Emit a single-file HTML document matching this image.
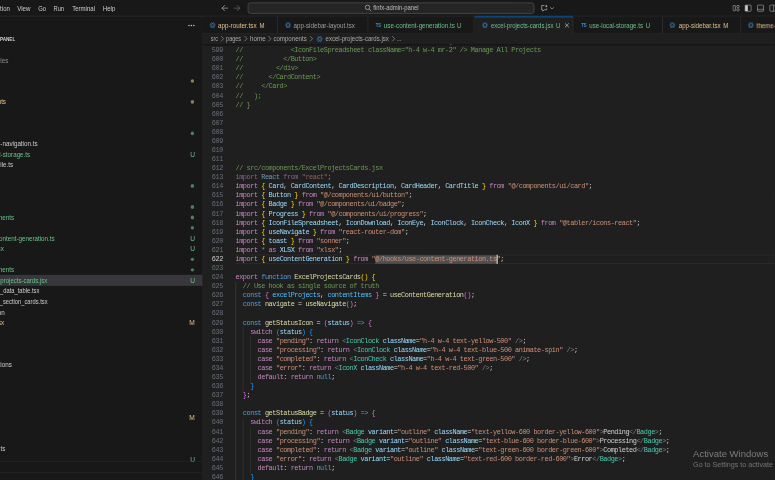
<!DOCTYPE html>
<html lang="en"><head><meta charset="utf-8"><title>excel-projects-cards.jsx - finfx-admin-panel - Visual Studio Code</title>
<style>
html,body{margin:0;padding:0;background:#181818;overflow:hidden;}
body{width:775px;height:480px;position:relative;font-family:"Liberation Sans",sans-serif;}
#root{position:absolute;left:0;top:0;width:1621.3px;height:1004.2px;transform:scale(0.478) rotate(0.002deg);transform-origin:0 0;overflow:hidden;filter:blur(0.7px);}
.t{position:absolute;height:22px;line-height:22px;white-space:pre;font-family:"Liberation Sans",sans-serif;}
.abs{position:absolute;}
.code{position:absolute;white-space:pre;font-family:"Liberation Mono",monospace;font-size:14.4px;letter-spacing:-0.942px;height:19px;line-height:19px;color:#d4d4d4;}
.ln{position:absolute;white-space:pre;font-family:"Liberation Mono",monospace;font-size:14.4px;letter-spacing:-0.942px;height:19px;line-height:19px;color:#666e7a;text-align:right;width:60px;}
.c{color:#6a9955}.k{color:#c586c0}.b{color:#569cd6}.v{color:#9cdcfe}.n{color:#4fc1ff}
.f{color:#dcdcaa}.s{color:#ce9178}.y{color:#4ec9b0}.g{color:#808080}
.b1{color:#ffd700}.b2{color:#da70d6}.b3{color:#179fff}
.fade{opacity:.62}
.sel{background:#4e4e4e}
</style></head><body><div id="root">

<div class="abs" style="left:0;top:0;width:100%;height:35.25px;background:#181818;border-bottom:2px solid #303030;box-sizing:border-box"></div>
<div class="t " style="right:1600.42px;transform-origin:100% 50%;top:5.95px;font-size:14.24px;color:#cccccc;transform:scaleX(0.8850);">Selection</div>
<div class="t " style="left:36.19px;transform-origin:0 50%;top:5.95px;font-size:14.24px;color:#cccccc;transform:scaleX(0.9023);">View</div>
<div class="t " style="left:79.71px;transform-origin:0 50%;top:5.95px;font-size:14.24px;color:#cccccc;transform:scaleX(0.8702);">Go</div>
<div class="t " style="left:112.34px;transform-origin:0 50%;top:5.95px;font-size:14.24px;color:#cccccc;transform:scaleX(0.8410);">Run</div>
<div class="t " style="left:150.84px;transform-origin:0 50%;top:5.95px;font-size:14.24px;color:#cccccc;transform:scaleX(0.8865);">Terminal</div>
<div class="t " style="left:215.06px;transform-origin:0 50%;top:5.95px;font-size:14.24px;color:#cccccc;transform:scaleX(0.8930);">Help</div>
<svg class="abs" style="left:462.29px;top:9.15px" width="16" height="16" viewBox="0 0 16 16"><g fill="none" stroke="#cccccc" stroke-width="1.2" stroke-linecap="square"><path d="M14 8H3M7.6 2.6 2.4 8l5.2 5.4"/></g></svg>
<svg class="abs" style="left:488.23px;top:9.15px" width="16" height="16" viewBox="0 0 16 16"><g transform="scale(-1,1) translate(-16,0)" fill="none" stroke="#7a7a7a" stroke-width="1.2" stroke-linecap="square"><path d="M14 8H3M7.6 2.6 2.4 8l5.2 5.4"/></g></svg>
<div class="abs" style="left:517.57px;top:5.44px;width:600.63px;height:23.33px;box-sizing:border-box;border:2px solid #454545;border-radius:6px;background:#252525"></div>
<svg class="abs" style="left:761.67px;top:9.15px" width="16" height="16" viewBox="0 0 16 16" fill="none" stroke="#cccccc" stroke-width="1.3"><circle cx="6.8" cy="6.4" r="4.6"/><path d="M10.1 9.8 15 14.7"/></svg>
<div class="t " style="left:781.38px;transform-origin:0 50%;top:6.15px;font-size:13.56px;color:#bdbdbd;transform:scaleX(0.9132);">finfx-admin-panel</div>
<svg class="abs" style="left:1131.33px;top:8.74px" width="16" height="16" viewBox="0 0 16 16" fill="none" stroke="#cccccc" stroke-width="1.3"><path d="M8 2.5H2.2v9h2.3v2.8l3-2.8h5.3V8.5"/><path d="M11.8 0.6l.9 2.2 2.2.9-2.2.9-.9 2.2-.9-2.2-2.2-.9 2.2-.9z" fill="#cccccc" stroke="none"/></svg>
<svg class="abs" style="left:1150.02px;top:11.74px" width="10" height="10" viewBox="0 0 10 10" fill="none" stroke="#cccccc" stroke-width="1.2"><path d="M1.2 3.2 5 7l3.8-3.8"/></svg>
<svg class="abs" style="left:1532.38px;top:8.95px" width="16" height="16" viewBox="0 0 16 16" fill="none" stroke="#cccccc" stroke-width="1.1"><rect x="1.5" y="2.5" width="5" height="11" rx="1"/><rect x="9.5" y="2.5" width="5" height="4" rx="1"/><rect x="9.5" y="9.5" width="5" height="4" rx="1"/></svg>
<svg class="abs" style="left:1557.48px;top:8.95px" width="16" height="16" viewBox="0 0 16 16" fill="none" stroke="#cccccc" stroke-width="1.1"><rect x="1.5" y="1.5" width="13" height="13" rx="1.3"/><path d="M2 2h5.5v12H2z" fill="#cccccc" stroke="none"/></svg>
<svg class="abs" style="left:1583.00px;top:8.95px" width="16" height="16" viewBox="0 0 16 16" fill="none" stroke="#cccccc" stroke-width="1.1"><rect x="1.5" y="1.5" width="13" height="13" rx="1.3"/><path d="M1.5 10.5h13" stroke-width="1"/></svg>
<svg class="abs" style="left:1608.53px;top:8.95px" width="16" height="16" viewBox="0 0 16 16" fill="none" stroke="#cccccc" stroke-width="1.1"><rect x="1.5" y="1.5" width="13" height="13" rx="1.3"/><path d="M9.5 1.5v13"/></svg>
<div class="abs" style="left:0;top:35.25px;width:423.64px;bottom:0;background:#181818;border-right:1px solid #2b2b2b;box-sizing:border-box"></div>
<div class="abs" style="left:393.61px;top:51.95px;width:2.9px;height:2.9px;border-radius:50%;background:#cccccc"></div>
<div class="abs" style="left:398.61px;top:51.95px;width:2.9px;height:2.9px;border-radius:50%;background:#cccccc"></div>
<div class="abs" style="left:403.61px;top:51.95px;width:2.9px;height:2.9px;border-radius:50%;background:#cccccc"></div>
<div class="t" style="right:1589.33px;top:70.38px;font-size:12.6px;font-weight:700;color:#d4d4d4;transform:scaleX(0.76);transform-origin:100% 50%">FINFX-ADMIN-PANEL</div>
<div class="abs" style="left:0;top:575.31px;width:423.64px;height:22.38px;background:#37373d"></div>
<div class="t " style="right:1603.77px;transform-origin:100% 50%;top:114.52px;font-size:14.24px;color:#8c8c8c;transform:scaleX(0.9204);">node_modules</div>
<div class="abs" style="left:398.60px;top:165.56px;width:7.4px;height:7.4px;border-radius:50%;background:#8f7e62"></div>
<div class="t " style="right:1608.79px;transform-origin:100% 50%;top:202.39px;font-size:14.24px;color:#e2c08d;transform:scaleX(0.9204);">components</div>
<div class="abs" style="left:398.60px;top:209.49px;width:7.4px;height:7.4px;border-radius:50%;background:#8f7e62"></div>
<div class="abs" style="left:398.60px;top:275.39px;width:7.4px;height:7.4px;border-radius:50%;background:#4d7f60"></div>
<div class="t " style="right:1542.26px;transform-origin:100% 50%;top:290.26px;font-size:14.24px;color:#cccccc;transform:scaleX(0.9204);">use-navigation.ts</div>
<div class="t " style="right:1558.58px;transform-origin:100% 50%;top:312.22px;font-size:14.24px;color:#69c389;transform:scaleX(0.9204);">use-local-storage.ts</div>
<div class="t " style="left:397.91px;transform-origin:0 50%;top:312.64px;font-size:14.01px;color:#69c389;transform:scaleX(0.9912);">U</div>
<div class="t " style="right:1593.93px;transform-origin:100% 50%;top:334.19px;font-size:14.24px;color:#cccccc;transform:scaleX(0.9204);">use-mobile.ts</div>
<div class="abs" style="left:398.60px;top:385.22px;width:7.4px;height:7.4px;border-radius:50%;background:#4d7f60"></div>
<div class="abs" style="left:398.60px;top:429.15px;width:7.4px;height:7.4px;border-radius:50%;background:#4d7f60"></div>
<div class="t " style="right:1591.84px;transform-origin:100% 50%;top:444.02px;font-size:14.24px;color:#69c389;transform:scaleX(0.9204);">components</div>
<div class="abs" style="left:398.60px;top:451.12px;width:7.4px;height:7.4px;border-radius:50%;background:#4d7f60"></div>
<div class="abs" style="left:398.60px;top:473.09px;width:7.4px;height:7.4px;border-radius:50%;background:#4d7f60"></div>
<div class="t " style="right:1506.69px;transform-origin:100% 50%;top:487.95px;font-size:14.24px;color:#69c389;transform:scaleX(0.9204);">use-content-generation.ts</div>
<div class="t " style="left:397.91px;transform-origin:0 50%;top:488.37px;font-size:14.01px;color:#69c389;transform:scaleX(0.9912);">U</div>
<div class="t " style="right:1612.97px;transform-origin:100% 50%;top:509.92px;font-size:14.24px;color:#69c389;transform:scaleX(0.9204);">content-generation.jsx</div>
<div class="t " style="left:397.91px;transform-origin:0 50%;top:510.34px;font-size:14.01px;color:#69c389;transform:scaleX(0.9912);">U</div>
<div class="abs" style="left:398.60px;top:538.99px;width:7.4px;height:7.4px;border-radius:50%;background:#4d7f60"></div>
<div class="t " style="right:1591.84px;transform-origin:100% 50%;top:553.85px;font-size:14.24px;color:#69c389;transform:scaleX(0.9204);">components</div>
<div class="abs" style="left:398.60px;top:560.95px;width:7.4px;height:7.4px;border-radius:50%;background:#4d7f60"></div>
<div class="t " style="right:1522.80px;transform-origin:100% 50%;top:575.82px;font-size:14.24px;color:#69c389;transform:scaleX(0.8850);">excel-projects-cards.jsx</div>
<div class="t " style="left:397.91px;transform-origin:0 50%;top:576.24px;font-size:14.01px;color:#69c389;transform:scaleX(0.9912);">U</div>
<div class="t " style="right:1539.12px;transform-origin:100% 50%;top:597.79px;font-size:14.24px;color:#cccccc;transform:scaleX(0.8496);">chart_data_table.tsx</div>
<div class="t " style="right:1521.34px;transform-origin:100% 50%;top:619.75px;font-size:14.24px;color:#cccccc;transform:scaleX(0.8496);">chart_section_cards.tsx</div>
<div class="t " style="right:1611.51px;transform-origin:100% 50%;top:641.72px;font-size:14.24px;color:#cccccc;transform:scaleX(0.9204);">data.json</div>
<div class="t " style="right:1612.97px;transform-origin:100% 50%;top:663.69px;font-size:14.24px;color:#e2c08d;transform:scaleX(0.9204);">page.tsx</div>
<div class="t " style="left:396.44px;transform-origin:0 50%;top:664.10px;font-size:14.01px;color:#e2c08d;transform:scaleX(0.9912);">M</div>
<div class="t " style="right:1596.23px;transform-origin:100% 50%;top:751.55px;font-size:14.24px;color:#cccccc;transform:scaleX(0.9204);">transactions</div>
<div class="t " style="left:396.44px;transform-origin:0 50%;top:861.80px;font-size:14.01px;color:#e2c08d;transform:scaleX(0.9912);">M</div>
<div class="t " style="right:1610.04px;transform-origin:100% 50%;top:927.28px;font-size:14.24px;color:#cccccc;transform:scaleX(0.9204);">tailwind.config.ts</div>
<div class="t " style="left:397.91px;transform-origin:0 50%;top:949.67px;font-size:14.01px;color:#69c389;transform:scaleX(0.9912);">U</div>
<div class="abs" style="left:0;top:965.06px;width:423.64px;height:1px;background:#2b2b2b"></div>
<div class="abs" style="left:0;top:988.28px;width:423.64px;height:1px;background:#2b2b2b"></div>
<div class="abs" style="left:423.64px;top:35.25px;right:0;bottom:0;background:#1f1f1f"></div>
<div class="abs" style="left:423.64px;top:35.25px;right:0;height:34.62px;background:#181818;border-bottom:1px solid #2b2b2b;box-sizing:border-box"></div>
<div class="abs" style="left:423.64px;top:35.25px;width:157.95px;height:34.62px;background:#181818;border-right:2px solid #2e2e2e;border-bottom:1px solid #2b2b2b;box-sizing:border-box"></div>
<svg class="abs" style="left:438.28px;top:45.60px" width="13.4" height="13.4" viewBox="0 0 16 16" fill="none" stroke="#3c7fb6" stroke-width="1.25"><ellipse cx="8" cy="8" rx="7.2" ry="2.8"/><ellipse cx="8" cy="8" rx="7.2" ry="2.8" transform="rotate(60 8 8)"/><ellipse cx="8" cy="8" rx="7.2" ry="2.8" transform="rotate(120 8 8)"/><circle cx="8" cy="8" r="2.7" fill="#1b1b1b" stroke="none"/><circle cx="8" cy="8" r="0.9" fill="#3c7fb6" stroke="none"/></svg>
<div class="t " style="left:456.49px;transform-origin:0 50%;top:41.93px;font-size:14.24px;color:#e2c08d;transform:scaleX(0.9276);">app-router.tsx</div>
<div class="t " style="left:543.31px;transform-origin:0 50%;top:42.56px;font-size:14.24px;color:#e2c08d;transform:scaleX(0.8850);">M</div>
<div class="abs" style="left:581.59px;top:35.25px;width:189.12px;height:34.62px;background:#181818;border-right:2px solid #2e2e2e;border-bottom:1px solid #2b2b2b;box-sizing:border-box"></div>
<svg class="abs" style="left:595.60px;top:45.60px" width="13.4" height="13.4" viewBox="0 0 16 16" fill="none" stroke="#3c7fb6" stroke-width="1.25"><ellipse cx="8" cy="8" rx="7.2" ry="2.8"/><ellipse cx="8" cy="8" rx="7.2" ry="2.8" transform="rotate(60 8 8)"/><ellipse cx="8" cy="8" rx="7.2" ry="2.8" transform="rotate(120 8 8)"/><circle cx="8" cy="8" r="2.7" fill="#1b1b1b" stroke="none"/><circle cx="8" cy="8" r="0.9" fill="#3c7fb6" stroke="none"/></svg>
<div class="t " style="left:614.23px;transform-origin:0 50%;top:41.93px;font-size:14.24px;color:#9d9d9d;transform:scaleX(0.9170);">app-sidebar-layout.tsx</div>
<div class="abs" style="left:770.71px;top:35.25px;width:222.59px;height:34.62px;background:#181818;border-right:2px solid #2e2e2e;border-bottom:1px solid #2b2b2b;box-sizing:border-box"></div>
<div class="t " style="left:785.77px;transform-origin:0 50%;top:41.30px;font-size:11.53px;color:#3b8fd0;transform:scaleX(0.7812);font-weight:700;">TS</div>
<div class="t " style="left:803.35px;transform-origin:0 50%;top:41.93px;font-size:14.24px;color:#69c389;transform:scaleX(0.9199);">use-content-generation.ts</div>
<div class="t " style="left:956.28px;transform-origin:0 50%;top:42.56px;font-size:14.24px;color:#69c389;transform:scaleX(0.8850);">U</div>
<div class="abs" style="left:993.31px;top:35.25px;width:206.28px;height:34.62px;background:#1f1f1f;border-right:2px solid #2e2e2e;box-sizing:border-box"></div>
<svg class="abs" style="left:1007.74px;top:45.60px" width="13.4" height="13.4" viewBox="0 0 16 16" fill="none" stroke="#3c7fb6" stroke-width="1.25"><ellipse cx="8" cy="8" rx="7.2" ry="2.8"/><ellipse cx="8" cy="8" rx="7.2" ry="2.8" transform="rotate(60 8 8)"/><ellipse cx="8" cy="8" rx="7.2" ry="2.8" transform="rotate(120 8 8)"/><circle cx="8" cy="8" r="2.7" fill="#1b1b1b" stroke="none"/><circle cx="8" cy="8" r="0.9" fill="#3c7fb6" stroke="none"/></svg>
<div class="t " style="left:1027.20px;transform-origin:0 50%;top:41.93px;font-size:14.24px;color:#69c389;transform:scaleX(0.8790);">excel-projects-cards.jsx</div>
<div class="t " style="left:1163.39px;transform-origin:0 50%;top:42.56px;font-size:14.24px;color:#69c389;transform:scaleX(0.8850);">U</div>
<div class="abs" style="left:993.31px;top:33.45px;width:205.28px;height:3.2px;background:#0d4576"></div>
<svg class="abs" style="left:1177.56px;top:45.14px" width="16" height="16" viewBox="0 0 16 16" fill="none" stroke="#e0e0e0" stroke-width="1.3"><path d="M4 4l8 8M12 4l-8 8"/></svg>
<div class="abs" style="left:1199.58px;top:35.25px;width:187.03px;height:34.62px;background:#181818;border-right:2px solid #2e2e2e;border-bottom:1px solid #2b2b2b;box-sizing:border-box"></div>
<div class="t " style="left:1215.69px;transform-origin:0 50%;top:41.30px;font-size:11.53px;color:#3b8fd0;transform:scaleX(0.7812);font-weight:700;">TS</div>
<div class="t " style="left:1233.05px;transform-origin:0 50%;top:41.93px;font-size:14.24px;color:#69c389;transform:scaleX(0.9025);">use-local-storage.ts</div>
<div class="t " style="left:1350.84px;transform-origin:0 50%;top:42.56px;font-size:14.24px;color:#69c389;transform:scaleX(0.8850);">U</div>
<div class="abs" style="left:1386.61px;top:35.25px;width:164.85px;height:34.62px;background:#181818;border-right:2px solid #2e2e2e;border-bottom:1px solid #2b2b2b;box-sizing:border-box"></div>
<svg class="abs" style="left:1400.41px;top:45.60px" width="13.4" height="13.4" viewBox="0 0 16 16" fill="none" stroke="#3c7fb6" stroke-width="1.25"><ellipse cx="8" cy="8" rx="7.2" ry="2.8"/><ellipse cx="8" cy="8" rx="7.2" ry="2.8" transform="rotate(60 8 8)"/><ellipse cx="8" cy="8" rx="7.2" ry="2.8" transform="rotate(120 8 8)"/><circle cx="8" cy="8" r="2.7" fill="#1b1b1b" stroke="none"/><circle cx="8" cy="8" r="0.9" fill="#3c7fb6" stroke="none"/></svg>
<div class="t " style="left:1419.67px;transform-origin:0 50%;top:41.93px;font-size:14.24px;color:#e2c08d;transform:scaleX(0.9056);">app-sidebar.tsx</div>
<div class="t " style="left:1513.39px;transform-origin:0 50%;top:42.56px;font-size:14.24px;color:#e2c08d;transform:scaleX(0.8850);">M</div>
<div class="abs" style="left:1551.46px;top:35.25px;width:122.18px;height:34.62px;background:#181818;border-right:2px solid #2e2e2e;border-bottom:1px solid #2b2b2b;box-sizing:border-box"></div>
<svg class="abs" style="left:1564.22px;top:45.60px" width="13.4" height="13.4" viewBox="0 0 16 16" fill="none" stroke="#3c7fb6" stroke-width="1.25"><ellipse cx="8" cy="8" rx="7.2" ry="2.8"/><ellipse cx="8" cy="8" rx="7.2" ry="2.8" transform="rotate(60 8 8)"/><ellipse cx="8" cy="8" rx="7.2" ry="2.8" transform="rotate(120 8 8)"/><circle cx="8" cy="8" r="2.7" fill="#1b1b1b" stroke="none"/><circle cx="8" cy="8" r="0.9" fill="#3c7fb6" stroke="none"/></svg>
<div class="t " style="left:1583.26px;transform-origin:0 50%;top:41.93px;font-size:14.24px;color:#e2c08d;transform:scaleX(0.8850);">theme-provider.tsx</div>
<div class="t " style="left:440.59px;transform-origin:0 50%;top:70.38px;font-size:14.24px;color:#a9a9a9;transform:scaleX(0.7716);">src</div>
<svg class="abs" style="left:457.06px;top:73.38px" width="16" height="16" viewBox="0 0 16 16" fill="none" stroke="#a9a9a9" stroke-width="1.25"><path d="M5.6 2.6 10.8 8l-5.2 5.4"/></svg>
<div class="t " style="left:473.22px;transform-origin:0 50%;top:70.38px;font-size:14.24px;color:#a9a9a9;transform:scaleX(0.8089);">pages</div>
<svg class="abs" style="left:506.02px;top:73.38px" width="16" height="16" viewBox="0 0 16 16" fill="none" stroke="#a9a9a9" stroke-width="1.25"><path d="M5.6 2.6 10.8 8l-5.2 5.4"/></svg>
<div class="t " style="left:522.59px;transform-origin:0 50%;top:70.38px;font-size:14.24px;color:#a9a9a9;transform:scaleX(0.9222);">home</div>
<svg class="abs" style="left:556.23px;top:73.38px" width="16" height="16" viewBox="0 0 16 16" fill="none" stroke="#a9a9a9" stroke-width="1.25"><path d="M5.6 2.6 10.8 8l-5.2 5.4"/></svg>
<div class="t " style="left:571.97px;transform-origin:0 50%;top:70.38px;font-size:14.24px;color:#a9a9a9;transform:scaleX(0.8981);">components</div>
<svg class="abs" style="left:643.05px;top:73.38px" width="16" height="16" viewBox="0 0 16 16" fill="none" stroke="#a9a9a9" stroke-width="1.25"><path d="M5.6 2.6 10.8 8l-5.2 5.4"/></svg>
<svg class="abs" style="left:662.34px;top:74.68px" width="13.4" height="13.4" viewBox="0 0 16 16" fill="none" stroke="#3c7fb6" stroke-width="1.25"><ellipse cx="8" cy="8" rx="7.2" ry="2.8"/><ellipse cx="8" cy="8" rx="7.2" ry="2.8" transform="rotate(60 8 8)"/><ellipse cx="8" cy="8" rx="7.2" ry="2.8" transform="rotate(120 8 8)"/><circle cx="8" cy="8" r="2.7" fill="#1b1b1b" stroke="none"/><circle cx="8" cy="8" r="0.9" fill="#3c7fb6" stroke="none"/></svg>
<div class="t " style="left:681.38px;transform-origin:0 50%;top:70.38px;font-size:14.24px;color:#a9a9a9;transform:scaleX(0.8903);">excel-projects-cards.jsx</div>
<svg class="abs" style="left:814.59px;top:73.38px" width="16" height="16" viewBox="0 0 16 16" fill="none" stroke="#a9a9a9" stroke-width="1.25"><path d="M5.6 2.6 10.8 8l-5.2 5.4"/></svg>
<div class="t " style="left:830.33px;transform-origin:0 50%;top:69.75px;font-size:14.24px;color:#a9a9a9;transform:scaleX(0.8286);">...</div>
<div class="abs" style="left:423.64px;top:92.05px;right:0;height:5px;background:linear-gradient(#00000070,#00000000);z-index:5"></div>
<div class="abs" style="left:423.64px;top:92.05px;right:0;bottom:0;overflow:hidden">
<div class="abs" style="left:69.04px;top:440.92px;right:0;height:19px;box-sizing:border-box;border-top:1.5px solid #363636;border-bottom:1.5px solid #363636"></div>
<div class="abs" style="left:361.56px;top:441.52px;width:254.03px;height:18.4px;background:#505050"></div>
<div class="abs" style="left:69.04px;top:497.92px;width:1px;height:456px;background:#505050"></div>
<div class="abs" style="left:84.43px;top:592.92px;width:1px;height:133px;background:#404040"></div>
<div class="abs" style="left:99.83px;top:611.92px;width:1px;height:95px;background:#404040"></div>
<div class="abs" style="left:84.43px;top:782.92px;width:1px;height:171px;background:#404040"></div>
<div class="abs" style="left:99.83px;top:801.92px;width:1px;height:95px;background:#404040"></div>
<div class="ln" style="left:-17.32px;top:-15.08px;color:#666e7a">598</div>
<div class="code" style="left:69.04px;top:-15.08px"><span class="c">//           &lt;Button variant=&quot;outline&quot; className=&quot;w-full bg-white&quot;&gt;</span></div>
<div class="ln" style="left:-17.32px;top:3.92px;color:#666e7a">599</div>
<div class="code" style="left:69.04px;top:3.92px"><span class="c">//             &lt;IconFileSpreadsheet className=&quot;h-4 w-4 mr-2&quot; /&gt; Manage All Projects</span></div>
<div class="ln" style="left:-17.32px;top:22.92px;color:#666e7a">600</div>
<div class="code" style="left:69.04px;top:22.92px"><span class="c">//           &lt;/Button&gt;</span></div>
<div class="ln" style="left:-17.32px;top:41.92px;color:#666e7a">601</div>
<div class="code" style="left:69.04px;top:41.92px"><span class="c">//         &lt;/div&gt;</span></div>
<div class="ln" style="left:-17.32px;top:60.92px;color:#666e7a">602</div>
<div class="code" style="left:69.04px;top:60.92px"><span class="c">//       &lt;/CardContent&gt;</span></div>
<div class="ln" style="left:-17.32px;top:79.92px;color:#666e7a">603</div>
<div class="code" style="left:69.04px;top:79.92px"><span class="c">//     &lt;/Card&gt;</span></div>
<div class="ln" style="left:-17.32px;top:98.92px;color:#666e7a">604</div>
<div class="code" style="left:69.04px;top:98.92px"><span class="c">//   );</span></div>
<div class="ln" style="left:-17.32px;top:117.92px;color:#666e7a">605</div>
<div class="code" style="left:69.04px;top:117.92px"><span class="c">// }</span></div>
<div class="ln" style="left:-17.32px;top:136.92px;color:#666e7a">606</div>
<div class="ln" style="left:-17.32px;top:155.92px;color:#666e7a">607</div>
<div class="ln" style="left:-17.32px;top:174.92px;color:#666e7a">608</div>
<div class="ln" style="left:-17.32px;top:193.92px;color:#666e7a">609</div>
<div class="ln" style="left:-17.32px;top:212.92px;color:#666e7a">610</div>
<div class="ln" style="left:-17.32px;top:231.92px;color:#666e7a">611</div>
<div class="ln" style="left:-17.32px;top:250.92px;color:#666e7a">612</div>
<div class="code" style="left:69.04px;top:250.92px"><span class="c">// src/components/ExcelProjectsCards.jsx</span></div>
<div class="ln" style="left:-17.32px;top:269.92px;color:#666e7a">613</div>
<div class="code" style="left:69.04px;top:269.92px"><span class="fade"><span class="k">import</span> <span class="v">React</span> <span class="k">from</span> <span class="s">&quot;react&quot;</span>;</span></div>
<div class="ln" style="left:-17.32px;top:288.92px;color:#666e7a">614</div>
<div class="code" style="left:69.04px;top:288.92px"><span class="k">import</span> <span class="b1">{</span> <span class="v">Card</span>, <span class="v">CardContent</span>, <span class="v">CardDescription</span>, <span class="v">CardHeader</span>, <span class="v">CardTitle</span> <span class="b1">}</span> <span class="k">from</span> <span class="s">&quot;@/components/ui/card&quot;</span>;</div>
<div class="ln" style="left:-17.32px;top:307.92px;color:#666e7a">615</div>
<div class="code" style="left:69.04px;top:307.92px"><span class="k">import</span> <span class="b1">{</span> <span class="v">Button</span> <span class="b1">}</span> <span class="k">from</span> <span class="s">&quot;@/components/ui/button&quot;</span>;</div>
<div class="ln" style="left:-17.32px;top:326.92px;color:#666e7a">616</div>
<div class="code" style="left:69.04px;top:326.92px"><span class="k">import</span> <span class="b1">{</span> <span class="v">Badge</span> <span class="b1">}</span> <span class="k">from</span> <span class="s">&quot;@/components/ui/badge&quot;</span>;</div>
<div class="ln" style="left:-17.32px;top:345.92px;color:#666e7a">617</div>
<div class="code" style="left:69.04px;top:345.92px"><span class="k">import</span> <span class="b1">{</span> <span class="v">Progress</span> <span class="b1">}</span> <span class="k">from</span> <span class="s">&quot;@/components/ui/progress&quot;</span>;</div>
<div class="ln" style="left:-17.32px;top:364.92px;color:#666e7a">618</div>
<div class="code" style="left:69.04px;top:364.92px"><span class="k">import</span> <span class="b1">{</span> <span class="v">IconFileSpreadsheet</span>, <span class="v">IconDownload</span>, <span class="v">IconEye</span>, <span class="v">IconClock</span>, <span class="v">IconCheck</span>, <span class="v">IconX</span> <span class="b1">}</span> <span class="k">from</span> <span class="s">&quot;@tabler/icons-react&quot;</span>;</div>
<div class="ln" style="left:-17.32px;top:383.92px;color:#666e7a">619</div>
<div class="code" style="left:69.04px;top:383.92px"><span class="k">import</span> <span class="b1">{</span> <span class="v">useNavigate</span> <span class="b1">}</span> <span class="k">from</span> <span class="s">&quot;react-router-dom&quot;</span>;</div>
<div class="ln" style="left:-17.32px;top:402.92px;color:#666e7a">620</div>
<div class="code" style="left:69.04px;top:402.92px"><span class="k">import</span> <span class="b1">{</span> <span class="v">toast</span> <span class="b1">}</span> <span class="k">from</span> <span class="s">&quot;sonner&quot;</span>;</div>
<div class="ln" style="left:-17.32px;top:421.92px;color:#666e7a">621</div>
<div class="code" style="left:69.04px;top:421.92px"><span class="k">import</span> <span class="b">*</span> <span class="k">as</span> <span class="v">XLSX</span> <span class="k">from</span> <span class="s">&quot;xlsx&quot;</span>;</div>
<div class="ln" style="left:-17.32px;top:440.92px;color:#cccccc">622</div>
<div class="code" style="left:69.04px;top:440.92px"><span class="k">import</span> <span class="b1">{</span> <span class="v">useContentGeneration</span> <span class="b1">}</span> <span class="k">from</span> <span class="s">&quot;@/hooks/use-content-generation.ts&quot;</span>;</div>
<div class="ln" style="left:-17.32px;top:459.92px;color:#666e7a">623</div>
<div class="ln" style="left:-17.32px;top:478.92px;color:#666e7a">624</div>
<div class="code" style="left:69.04px;top:478.92px"><span class="k">export</span> <span class="b">function</span> <span class="f">ExcelProjectsCards</span><span class="b1">()</span> <span class="b1">{</span></div>
<div class="ln" style="left:-17.32px;top:497.92px;color:#666e7a">625</div>
<div class="code" style="left:69.04px;top:497.92px">  <span class="c">// Use hook as single source of truth</span></div>
<div class="ln" style="left:-17.32px;top:516.92px;color:#666e7a">626</div>
<div class="code" style="left:69.04px;top:516.92px">  <span class="b">const</span> <span class="b2">{</span> <span class="n">excelProjects</span>, <span class="n">contentItems</span> <span class="b2">}</span> = <span class="f">useContentGeneration</span><span class="b2">()</span>;</div>
<div class="ln" style="left:-17.32px;top:535.92px;color:#666e7a">627</div>
<div class="code" style="left:69.04px;top:535.92px">  <span class="b">const</span> <span class="f">navigate</span> = <span class="f">useNavigate</span><span class="b2">()</span>;</div>
<div class="ln" style="left:-17.32px;top:554.92px;color:#666e7a">628</div>
<div class="ln" style="left:-17.32px;top:573.92px;color:#666e7a">629</div>
<div class="code" style="left:69.04px;top:573.92px">  <span class="b">const</span> <span class="f">getStatusIcon</span> = <span class="b2">(</span><span class="v">status</span><span class="b2">)</span> <span class="b">=&gt;</span> <span class="b2">{</span></div>
<div class="ln" style="left:-17.32px;top:592.92px;color:#666e7a">630</div>
<div class="code" style="left:69.04px;top:592.92px">    <span class="k">switch</span> <span class="b3">(</span><span class="v">status</span><span class="b3">)</span> <span class="b3">{</span></div>
<div class="ln" style="left:-17.32px;top:611.92px;color:#666e7a">631</div>
<div class="code" style="left:69.04px;top:611.92px">      <span class="k">case</span> <span class="s">&quot;pending&quot;</span>: <span class="k">return</span> <span class="g">&lt;</span><span class="y">IconClock</span> <span class="v">className</span>=<span class="s">&quot;h-4 w-4 text-yellow-500&quot;</span> <span class="g">/&gt;</span>;</div>
<div class="ln" style="left:-17.32px;top:630.92px;color:#666e7a">632</div>
<div class="code" style="left:69.04px;top:630.92px">      <span class="k">case</span> <span class="s">&quot;processing&quot;</span>: <span class="k">return</span> <span class="g">&lt;</span><span class="y">IconClock</span> <span class="v">className</span>=<span class="s">&quot;h-4 w-4 text-blue-500 animate-spin&quot;</span> <span class="g">/&gt;</span>;</div>
<div class="ln" style="left:-17.32px;top:649.92px;color:#666e7a">633</div>
<div class="code" style="left:69.04px;top:649.92px">      <span class="k">case</span> <span class="s">&quot;completed&quot;</span>: <span class="k">return</span> <span class="g">&lt;</span><span class="y">IconCheck</span> <span class="v">className</span>=<span class="s">&quot;h-4 w-4 text-green-500&quot;</span> <span class="g">/&gt;</span>;</div>
<div class="ln" style="left:-17.32px;top:668.92px;color:#666e7a">634</div>
<div class="code" style="left:69.04px;top:668.92px">      <span class="k">case</span> <span class="s">&quot;error&quot;</span>: <span class="k">return</span> <span class="g">&lt;</span><span class="y">IconX</span> <span class="v">className</span>=<span class="s">&quot;h-4 w-4 text-red-500&quot;</span> <span class="g">/&gt;</span>;</div>
<div class="ln" style="left:-17.32px;top:687.92px;color:#666e7a">635</div>
<div class="code" style="left:69.04px;top:687.92px">      <span class="k">default</span>: <span class="k">return</span> <span class="b">null</span>;</div>
<div class="ln" style="left:-17.32px;top:706.92px;color:#666e7a">636</div>
<div class="code" style="left:69.04px;top:706.92px">    <span class="b3">}</span></div>
<div class="ln" style="left:-17.32px;top:725.92px;color:#666e7a">637</div>
<div class="code" style="left:69.04px;top:725.92px">  <span class="b2">}</span>;</div>
<div class="ln" style="left:-17.32px;top:744.92px;color:#666e7a">638</div>
<div class="ln" style="left:-17.32px;top:763.92px;color:#666e7a">639</div>
<div class="code" style="left:69.04px;top:763.92px">  <span class="b">const</span> <span class="f">getStatusBadge</span> = <span class="b2">(</span><span class="v">status</span><span class="b2">)</span> <span class="b">=&gt;</span> <span class="b2">{</span></div>
<div class="ln" style="left:-17.32px;top:782.92px;color:#666e7a">640</div>
<div class="code" style="left:69.04px;top:782.92px">    <span class="k">switch</span> <span class="b3">(</span><span class="v">status</span><span class="b3">)</span> <span class="b3">{</span></div>
<div class="ln" style="left:-17.32px;top:801.92px;color:#666e7a">641</div>
<div class="code" style="left:69.04px;top:801.92px">      <span class="k">case</span> <span class="s">&quot;pending&quot;</span>: <span class="k">return</span> <span class="g">&lt;</span><span class="y">Badge</span> <span class="v">variant</span>=<span class="s">&quot;outline&quot;</span> <span class="v">className</span>=<span class="s">&quot;text-yellow-600 border-yellow-600&quot;</span><span class="g">&gt;</span>Pending<span class="g">&lt;/</span><span class="y">Badge</span><span class="g">&gt;</span>;</div>
<div class="ln" style="left:-17.32px;top:820.92px;color:#666e7a">642</div>
<div class="code" style="left:69.04px;top:820.92px">      <span class="k">case</span> <span class="s">&quot;processing&quot;</span>: <span class="k">return</span> <span class="g">&lt;</span><span class="y">Badge</span> <span class="v">variant</span>=<span class="s">&quot;outline&quot;</span> <span class="v">className</span>=<span class="s">&quot;text-blue-600 border-blue-600&quot;</span><span class="g">&gt;</span>Processing<span class="g">&lt;/</span><span class="y">Badge</span><span class="g">&gt;</span>;</div>
<div class="ln" style="left:-17.32px;top:839.92px;color:#666e7a">643</div>
<div class="code" style="left:69.04px;top:839.92px">      <span class="k">case</span> <span class="s">&quot;completed&quot;</span>: <span class="k">return</span> <span class="g">&lt;</span><span class="y">Badge</span> <span class="v">variant</span>=<span class="s">&quot;outline&quot;</span> <span class="v">className</span>=<span class="s">&quot;text-green-600 border-green-600&quot;</span><span class="g">&gt;</span>Completed<span class="g">&lt;/</span><span class="y">Badge</span><span class="g">&gt;</span>;</div>
<div class="ln" style="left:-17.32px;top:858.92px;color:#666e7a">644</div>
<div class="code" style="left:69.04px;top:858.92px">      <span class="k">case</span> <span class="s">&quot;error&quot;</span>: <span class="k">return</span> <span class="g">&lt;</span><span class="y">Badge</span> <span class="v">variant</span>=<span class="s">&quot;outline&quot;</span> <span class="v">className</span>=<span class="s">&quot;text-red-600 border-red-600&quot;</span><span class="g">&gt;</span>Error<span class="g">&lt;/</span><span class="y">Badge</span><span class="g">&gt;</span>;</div>
<div class="ln" style="left:-17.32px;top:877.92px;color:#666e7a">645</div>
<div class="code" style="left:69.04px;top:877.92px">      <span class="k">default</span>: <span class="k">return</span> <span class="b">null</span>;</div>
<div class="ln" style="left:-17.32px;top:896.92px;color:#666e7a">646</div>
<div class="code" style="left:69.04px;top:896.92px">    <span class="b3">}</span></div>
<div class="ln" style="left:-17.32px;top:915.92px;color:#666e7a">647</div>
<div class="code" style="left:69.04px;top:915.92px">  <span class="b2">}</span>;</div>
<div class="abs" style="left:615.10px;top:440.92px;width:2.4px;height:19px;background:#ffffff"></div>
</div>
<div class="t " style="left:1449.58px;transform-origin:0 50%;top:937.95px;font-size:19.89px;color:#7e7e7e;transform:scaleX(1.0010);">Activate Windows</div>
<div class="t " style="left:1449.58px;transform-origin:0 50%;top:960.76px;font-size:14.92px;color:#767676;transform:scaleX(1.0030);">Go to Settings to activate</div>
<div class="t " style="left:1621.97px;transform-origin:0 50%;top:960.76px;font-size:14.92px;color:#767676;transform:scaleX(0.8850);">Windows.</div>
</div></body></html>
